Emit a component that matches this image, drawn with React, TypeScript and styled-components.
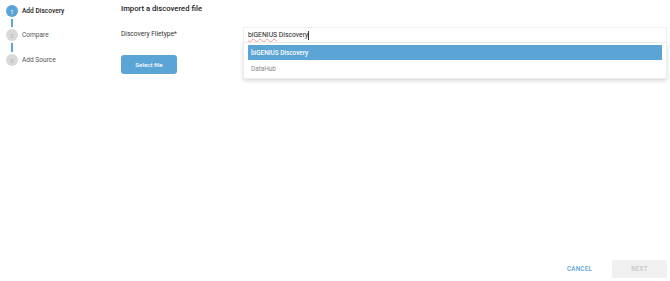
import React from "react";
import styled, { createGlobalStyle } from "styled-components";

const Global = createGlobalStyle`
  html, body { margin: 0; padding: 0; background: #fff; }
  body { font-family: Roboto, "Liberation Sans", sans-serif; color: #333; }
  * { box-sizing: border-box; }
`;

const Page = styled.div`
  width: 670px;
  height: 281px;
  display: flex;
  flex-direction: column;
  position: relative;
`;

const Main = styled.div`
  flex: 1;
  display: flex;
`;

const Stepper = styled.div`
  width: 121px;
  padding: 5px 0 0 6px;
  display: flex;
  flex-direction: column;
`;

const Step = styled.div`
  display: flex;
  align-items: center;
  gap: 4px;
  height: 12px;
`;

const Circle = styled.div<{ $active?: boolean }>`
  width: 12px;
  height: 12px;
  border-radius: 50%;
  background: ${(p) => (p.$active ? "#5aa4d6" : "#d9d9d9")};
  color: ${(p) => (p.$active ? "#fff" : "#b3b3b3")};
  font-size: 6px;
  display: flex;
  align-items: center;
  justify-content: center;
`;

const StepLabel = styled.span<{ $active?: boolean }>`
  font-size: 6.6px;
  color: ${(p) => (p.$active ? "#222" : "#555")};
  font-weight: ${(p) => (p.$active ? 500 : 400)};
`;

const Connector = styled.div<{ $h: number }>`
  width: 2px;
  height: ${(p) => p.$h}px;
  margin: 2px 0 2px 5px;
  background: #5aa4d6;
`;

const Content = styled.div`
  flex: 1;
  padding-top: 3px;
  display: flex;
  flex-direction: column;
`;

const Title = styled.div`
  font-size: 7.7px;
  font-weight: 500;
  color: #222;
  height: 12px;
  line-height: 12px;
`;

const Row = styled.div`
  display: flex;
  margin-top: 12px;
`;

const Left = styled.div`
  width: 122px;
  display: flex;
  flex-direction: column;
`;

const FieldLabel = styled.div`
  font-size: 6.6px;
  color: #333;
  height: 14px;
  line-height: 14px;
`;

const Button = styled.button`
  margin-top: 14px;
  width: 56px;
  height: 19px;
  border: none;
  border-radius: 3px;
  background: #5aa4d6;
  color: #fff;
  font-family: Roboto, "Liberation Sans", sans-serif;
  font-size: 6.2px;
  font-weight: 500;
  padding: 0;
`;

const Field = styled.div`
  position: relative;
  width: 424px;
`;

const Input = styled.div`
  height: 15px;
  border: 1px solid #f0f0f0;
  border-bottom: none;
  font-size: 6.8px;
  color: #222;
  padding-left: 4px;
  display: flex;
  align-items: center;
`;

const Typed = styled.span`
  text-decoration: underline wavy rgba(220, 90, 90, 0.55);
  text-decoration-thickness: 0.5px;
  text-underline-offset: 1px;
`;

const Caret = styled.span`
  display: inline-block;
  width: 1px;
  height: 9px;
  background: #333;
`;

const Menu = styled.div`
  position: absolute;
  top: 15px;
  left: 0;
  right: 0;
  height: 37px;
  background: #fff;
  border: 1px solid #ececec;
  box-shadow: 0 2px 4px rgba(0, 0, 0, 0.15);
  padding: 2px 4px 0 4px;
`;

const Option = styled.div<{ $selected?: boolean }>`
  height: 15px;
  display: flex;
  align-items: center;
  padding-left: 3px;
  font-size: 6.4px;
  background: ${(p) => (p.$selected ? "#5aa4d6" : "transparent")};
  color: ${(p) => (p.$selected ? "#fff" : "#888")};
  font-weight: ${(p) => (p.$selected ? 500 : 400)};
  margin-bottom: ${(p) => (p.$selected ? "1px" : "0")};
`;

const Footer = styled.div`
  display: flex;
  justify-content: flex-end;
  align-items: center;
  gap: 20px;
  padding: 0 3px 3px 0;
`;

const TextButton = styled.span`
  font-size: 6.3px;
  font-weight: 500;
  color: #5aa4d6;
  letter-spacing: 0.2px;
`;

const NextButton = styled.div`
  width: 55px;
  height: 18px;
  border-radius: 2px;
  background: #f0f0f0;
  color: #c8c8c8;
  font-size: 6.3px;
  font-weight: 500;
  display: flex;
  align-items: center;
  justify-content: center;
  letter-spacing: 0.2px;
`;

export default function App() {
  return (
    <Page>
      <Global />
      <Main>
        <Stepper>
          <Step>
            <Circle $active>1</Circle>
            <StepLabel $active>Add Discovery</StepLabel>
          </Step>
          <Connector $h={8} />
          <Step>
            <Circle>2</Circle>
            <StepLabel>Compare</StepLabel>
          </Step>
          <Connector $h={9} />
          <Step>
            <Circle>3</Circle>
            <StepLabel>Add Source</StepLabel>
          </Step>
        </Stepper>
        <Content>
          <Title>Import a discovered file</Title>
          <Row>
            <Left>
              <FieldLabel>Discovery Filetype*</FieldLabel>
              <Button>Select file</Button>
            </Left>
            <Field>
              <Input>
                <Typed>biGENIUS</Typed>&nbsp;Discovery
                <Caret />
              </Input>
              <Menu>
                <Option $selected>biGENIUS Discovery</Option>
                <Option>DataHub</Option>
              </Menu>
            </Field>
          </Row>
        </Content>
      </Main>
      <Footer>
        <TextButton>CANCEL</TextButton>
        <NextButton>NEXT</NextButton>
      </Footer>
    </Page>
  );
}
